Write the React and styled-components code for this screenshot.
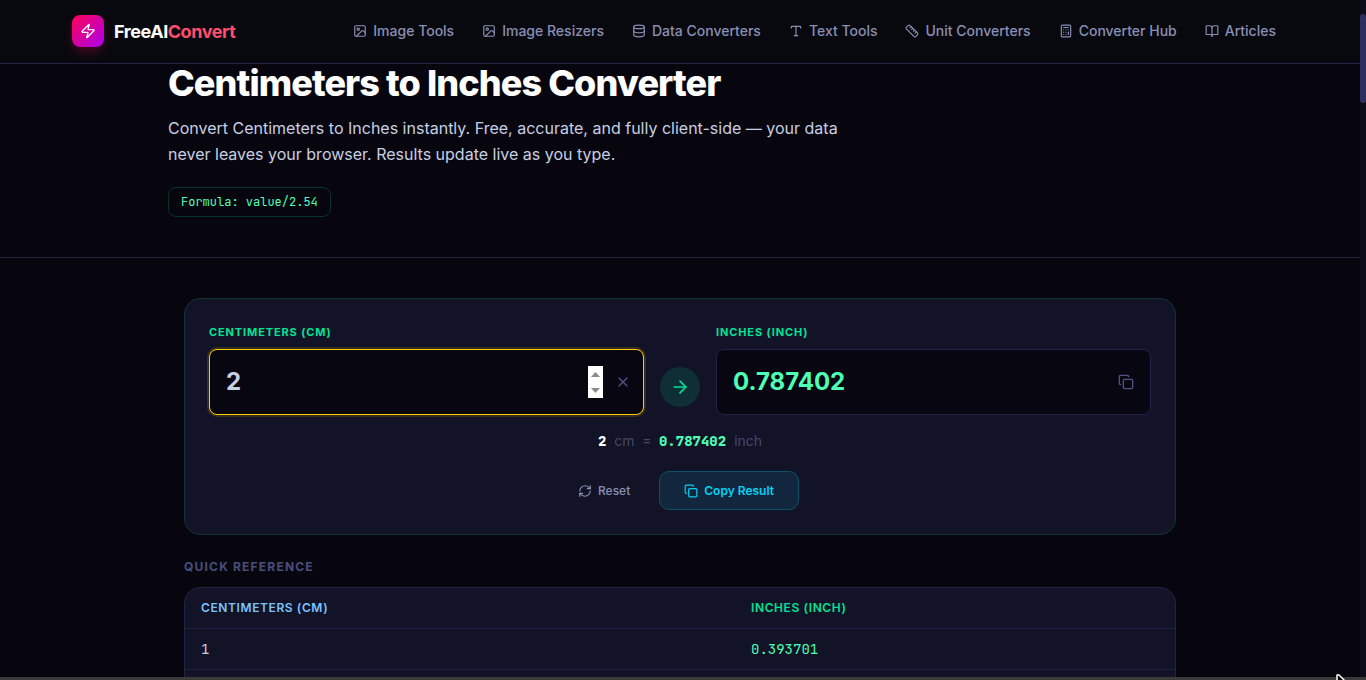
import React, { useState } from 'react';
import styled, { createGlobalStyle } from 'styled-components';
import {
  ArrowRight,
  BookOpen,
  Calculator,
  Copy,
  Database,
  Image,
  RefreshCw,
  Ruler,
  Type,
  X,
  Zap
} from 'lucide-react';

const mono = "'JetBrains Mono', 'DejaVu Sans Mono', monospace";

const GlobalStyle = createGlobalStyle`
  * {
    box-sizing: border-box;
  }
  body {
    margin: 0;
    background: #07060f;
    color: #c8cfe2;
    font-family: Inter, 'Liberation Sans', sans-serif;
    overflow: hidden;
  }
  button, input {
    font-family: inherit;
  }
`;

const Window = styled.div`
  display: grid;
  grid-template: minmax(0, 1fr) 3px / minmax(0, 1fr) 6px;
  height: 100vh;
`;

const Page = styled.div`
  overflow-y: auto;
  scrollbar-width: none;
`;

const ScrollTrack = styled.div`
  padding-top: 14px;
  background: #0d0d1a;
`;

const ScrollThumb = styled.div`
  height: 89px;
  border-radius: 3px;
  background: #2e2e5e;
`;

const WindowEdge = styled.div`
  grid-column: 1 / -1;
  background: #3b3a3a;
`;

const Pointer = styled.svg`
  position: fixed;
  right: 17px;
  bottom: -14px;
`;

const Header = styled.header`
  height: 64px;
  padding-bottom: 1px;
  background: #08090e;
  border-bottom: 1px solid #25234a;
`;

const HeaderInner = styled.div`
  display: flex;
  align-items: center;
  justify-content: space-between;
  height: 100%;
  max-width: 1280px;
  margin: 0 auto;
  padding: 0 44px 0 32px;
`;

const Brand = styled.a`
  display: flex;
  align-items: center;
  gap: 10px;
  color: #fff;
  font-size: 18px;
  font-weight: 700;
  letter-spacing: -0.45px;
  text-decoration: none;

  em {
    color: #ff4d6d;
    font-style: normal;
  }
`;

const BrandMark = styled.span`
  display: grid;
  place-items: center;
  width: 32px;
  height: 32px;
  border-radius: 8px;
  background: linear-gradient(135deg, #ff0055, #aa00ee);
  box-shadow: 0 6px 12px -2px rgba(255, 0, 85, 0.3);
`;

const Nav = styled.nav`
  display: flex;
  gap: 28px;
`;

const NavLink = styled.a`
  display: flex;
  align-items: center;
  gap: 6px;
  color: #8a8fb5;
  font-size: 14px;
  font-weight: 500;
  line-height: 20px;
  text-decoration: none;
  white-space: nowrap;
`;

const Hero = styled.section`
  border-bottom: 1px solid #25233c;
`;

const HeroInner = styled.div`
  max-width: 1024px;
  margin: 0 auto;
  padding-bottom: 40px;
`;

const Title = styled.h1`
  margin: 0 0 13px;
  color: #fff;
  font-size: 36px;
  font-weight: 800;
  line-height: 38px;
  letter-spacing: -0.9px;
`;

const Lead = styled.p`
  max-width: 672px;
  margin: 0 0 20px;
  font-size: 16px;
  line-height: 26px;
`;

const Formula = styled.code`
  display: inline-block;
  padding: 6px 12px;
  border: 1px solid #083326;
  border-radius: 8px;
  color: #4dffb4;
  font-family: ${mono};
  font-size: 12px;
  line-height: 16px;
  vertical-align: top;
`;

const Main = styled.main`
  max-width: 1024px;
  margin: 0 auto;
  padding: 40px 16px;
`;

const Card = styled.section`
  padding: 24px;
  border: 1px solid #0f3539;
  border-radius: 16px;
  background: #121326;
`;

const Converter = styled.div`
  display: grid;
  grid-template-columns: minmax(0, 1fr) 40px minmax(0, 1fr);
  gap: 16px;
  align-items: end;
`;

const FieldLabel = styled.label`
  display: block;
  margin-bottom: 8px;
  color: #00e396;
  font-size: 11px;
  font-weight: 700;
  line-height: 18px;
  letter-spacing: 0.88px;
  text-transform: uppercase;
`;

const Field = styled.div`
  display: flex;
  align-items: center;
  height: 66px;
  padding: 0 ${(p) => (p.$active ? 12 : 16)}px 0 16px;
  border: 1px solid ${(p) => (p.$active ? '#ffcc00' : '#212245')};
  border-radius: 8px;
  background: #070611;
  box-shadow: ${(p) => (p.$active ? '0 0 0 2px rgba(255, 204, 0, 0.15)' : 'none')};
`;

const Value = styled.input`
  flex: 1;
  min-width: 0;
  height: 32px;
  padding: 0;
  border: 0;
  outline: 0;
  background: transparent;
  color: ${(p) => p.$color};
  font-size: 24px;
  font-weight: 700;
  line-height: 32px;
  appearance: textfield;

  &::-webkit-inner-spin-button {
    display: none;
  }
`;

const Spinner = styled.div`
  display: flex;
  flex-direction: column;
  width: 15px;
  height: 32px;
  margin-right: 12px;
  background: #fff;
`;

const SpinButton = styled.button`
  display: grid;
  flex: 1;
  place-items: center;
  padding: 0;
  border: 0;
  background: transparent;
`;

const IconButton = styled.button`
  display: grid;
  place-items: center;
  padding: 0;
  border: 0;
  background: transparent;
  color: #4f5282;
`;

const Direction = styled.div`
  display: grid;
  place-items: center;
  width: 40px;
  height: 40px;
  margin-bottom: 8px;
  border-radius: 50%;
  background: #102e36;
  color: #00e396;
`;

const Summary = styled.p`
  display: flex;
  justify-content: center;
  gap: 8px;
  margin: 16px 0 0;
  color: #45476f;
  font-size: 14px;
  line-height: 20px;
`;

const Amount = styled.strong`
  color: ${(p) => (p.$result ? '#4dffb4' : '#fff')};
  font-family: ${mono};
  font-weight: 800;
`;

const Equals = styled.span`
  font-family: ${mono};
`;

const Actions = styled.div`
  display: flex;
  justify-content: center;
  gap: 12px;
  margin-top: 20px;
`;

const Action = styled.button`
  display: flex;
  align-items: center;
  gap: 6px;
  height: 39px;
  padding: 0 ${(p) => (p.$primary ? 24 : 16)}px;
  border: 1px solid ${(p) => (p.$primary ? '#0d5269' : 'transparent')};
  border-radius: 10px;
  background: ${(p) => (p.$primary ? '#12263d' : 'transparent')};
  color: ${(p) => (p.$primary ? '#00d4f5' : '#8a8fb5')};
  font-size: 12px;
  font-weight: ${(p) => (p.$primary ? 600 : 500)};
`;

const SectionTitle = styled.h2`
  margin: 24px 0 12px;
  color: #4a4e7c;
  font-size: 12px;
  font-weight: 700;
  line-height: 16px;
  letter-spacing: 1.2px;
  text-transform: uppercase;
`;

const TableCard = styled.div`
  overflow: hidden;
  border: 1px solid #212245;
  border-radius: 16px;
  background: #121326;
`;

const Table = styled.table`
  width: 100%;
  border-collapse: collapse;
  font-size: 14px;
  line-height: 20px;

  th, td {
    padding: 10px 16px;
    border-bottom: 1px solid #212245;
    text-align: left;
  }
  th {
    color: #7cc4ff;
    font-size: 12px;
    font-weight: 600;
    letter-spacing: 0.6px;
    text-transform: uppercase;
  }
  td {
    font-family: ${mono};
  }
  th:first-child {
    width: 550px;
  }
  th:last-child {
    color: #00e396;
  }
  td:last-child {
    color: #4dffb4;
  }
`;

const links = [
  ['Image Tools', Image],
  ['Image Resizers', Image],
  ['Data Converters', Database],
  ['Text Tools', Type],
  ['Unit Converters', Ruler],
  ['Converter Hub', Calculator],
  ['Articles', BookOpen]
];

const toInches = (cm) => String(Number((Number(cm) / 2.54).toFixed(6)));

export default function App() {
  const [cm, setCm] = useState('2');
  const inches = toInches(cm);
  const step = (by) => setCm(String(Number(cm) + by));

  return (
    <>
      <GlobalStyle />
      <Window>
        <Page>
          <Header>
            <HeaderInner>
              <Brand href="#">
                <BrandMark><Zap size={16} /></BrandMark>
                <span>FreeAI<em>Convert</em></span>
              </Brand>
              <Nav>
                {links.map(([name, Icon]) => (
                  <NavLink href="#" key={name}>
                    <Icon size={14} />
                    {name}
                  </NavLink>
                ))}
              </Nav>
            </HeaderInner>
          </Header>
          <Hero>
            <HeroInner>
              <Title>Centimeters to Inches Converter</Title>
              <Lead>
                Convert Centimeters to Inches instantly. Free, accurate, and fully client-side — your
                data never leaves your browser. Results update live as you type.
              </Lead>
              <Formula>Formula: value/2.54</Formula>
            </HeroInner>
          </Hero>
          <Main>
            <Card>
              <Converter>
                <div>
                  <FieldLabel htmlFor="cm">Centimeters (cm)</FieldLabel>
                  <Field $active>
                    <Value
                      id="cm"
                      type="number"
                      $color="#c8cfe2"
                      value={cm}
                      onChange={(e) => setCm(e.target.value)}
                    />
                    <Spinner>
                      <SpinButton aria-label="Increase" onClick={() => step(1)}>
                        <svg width="9" height="5"><path d="M0 5L4.5 0 9 5z" fill="#8b8b8b" /></svg>
                      </SpinButton>
                      <SpinButton aria-label="Decrease" onClick={() => step(-1)}>
                        <svg width="9" height="5"><path d="M0 0L4.5 5 9 0z" fill="#8b8b8b" /></svg>
                      </SpinButton>
                    </Spinner>
                    <IconButton aria-label="Clear" onClick={() => setCm('')}>
                      <X size={16} />
                    </IconButton>
                  </Field>
                </div>
                <Direction><ArrowRight size={20} /></Direction>
                <div>
                  <FieldLabel htmlFor="inch">Inches (inch)</FieldLabel>
                  <Field>
                    <Value id="inch" type="text" $color="#4dffb4" value={inches} readOnly />
                    <IconButton aria-label="Copy">
                      <Copy size={16} />
                    </IconButton>
                  </Field>
                </div>
              </Converter>
              <Summary>
                <Amount>{cm}</Amount>
                <span>cm</span>
                <Equals>=</Equals>
                <Amount $result>{inches}</Amount>
                <span>inch</span>
              </Summary>
              <Actions>
                <Action onClick={() => setCm('')}>
                  <RefreshCw size={14} />
                  Reset
                </Action>
                <Action $primary>
                  <Copy size={14} />
                  Copy Result
                </Action>
              </Actions>
            </Card>
            <SectionTitle>Quick Reference</SectionTitle>
            <TableCard>
              <Table>
                <thead>
                  <tr>
                    <th>Centimeters (cm)</th>
                    <th>Inches (inch)</th>
                  </tr>
                </thead>
                <tbody>
                  {[1, 2, 5, 10].map((n) => (
                    <tr key={n}>
                      <td>{n}</td>
                      <td>{toInches(n)}</td>
                    </tr>
                  ))}
                </tbody>
              </Table>
            </TableCard>
          </Main>
        </Page>
        <ScrollTrack><ScrollThumb /></ScrollTrack>
        <WindowEdge />
      </Window>
      <Pointer width="14" height="20" viewBox="0 0 14 20">
        <path d="M2 1h2l8 8-1 2H8l2 5-2 1-3-5-3 3z" fill="#000" stroke="#fff" strokeWidth="1.5" strokeLinejoin="round" />
      </Pointer>
    </>
  );
}
